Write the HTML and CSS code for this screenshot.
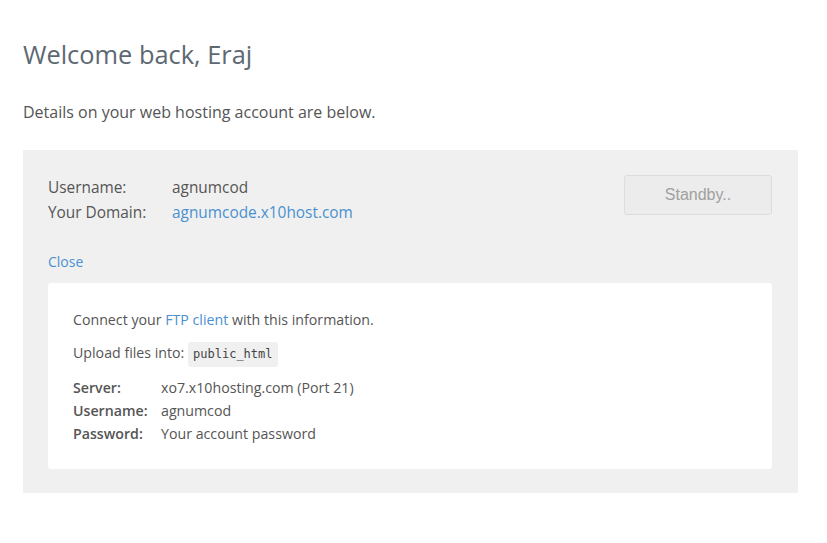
FILE: index.html
```html
<!DOCTYPE html>
<html>
<head>
<meta charset="utf-8">
<link rel="stylesheet" href="styles.css">
</head>
<body>
<div class="page">
  <h1 class="title">Welcome back, Eraj</h1>
  <p class="intro">Details on your web hosting account are below.</p>
  <div class="panel">
    <div class="top">
      <div class="info">
        <div class="row"><span class="label">Username:</span><span>agnumcod</span></div>
        <div class="row"><span class="label">Your Domain:</span><a class="link" href="#">agnumcode.x10host.com</a></div>
      </div>
      <button class="standby">Standby..</button>
    </div>
    <a class="close link" href="#">Close</a>
    <div class="card">
      <p class="line">Connect your <a class="link" href="#">FTP client</a> with this information.</p>
      <p class="line upload">Upload files into: <code class="code">public_html</code></p>
      <div class="ftp">
        <div class="frow"><span class="flabel">Server:</span><span>xo7.x10hosting.com (Port 21)</span></div>
        <div class="frow"><span class="flabel">Username:</span><span>agnumcod</span></div>
        <div class="frow"><span class="flabel">Password:</span><span>Your account password</span></div>
      </div>
    </div>
  </div>
</div>
</body>
</html>
```
FILE: styles.css
```css
html, body { margin: 0; padding: 0; background: #fff; }
body { font-family: "Open Sans", sans-serif; color: #555; }
.page { padding: 36px 29px 0 23px; }
.title { margin: 0; font-weight: 400; font-size: 25.4px; line-height: 36px; color: #5d6872; }
.intro { margin: 28px 0 0; font-size: 16px; line-height: 24px; color: #555; }
.panel { margin-top: 26px; background: #f0f0f0; padding: 25px 26px 24px 25px; }
.top { display: flex; justify-content: space-between; align-items: flex-start; }
.info { font-size: 15.4px; line-height: 25px; color: #555; }
.row { display: flex; }
.label { width: 124px; }
.link { color: #4a90d0; text-decoration: none; }
.standby { width: 148px; height: 40px; font-family: "Liberation Sans", Arial, sans-serif; font-size: 16px; color: #a0a0a0; background: #ececec; border: 1px solid #dcdcdc; border-radius: 3px; }
.close { display: inline-block; margin-top: 27px; font-size: 14px; line-height: 20px; }
.card { margin-top: 11px; background: #fff; border-radius: 3px; padding: 25px 25px 24px; font-size: 14.2px; color: #555; }
.line { margin: 0; line-height: 24px; }
.upload { margin-top: 9px; }
.code { display: inline-block; font-family: "DejaVu Sans Mono", monospace; font-size: 12px; line-height: 17px; background: #f0f0f0; padding: 4px 5px; border-radius: 3px; color: #444; vertical-align: middle; }
.ftp { margin-top: 9px; }
.frow { display: flex; line-height: 23px; }
.flabel { width: 88px; font-weight: 600; }
```
